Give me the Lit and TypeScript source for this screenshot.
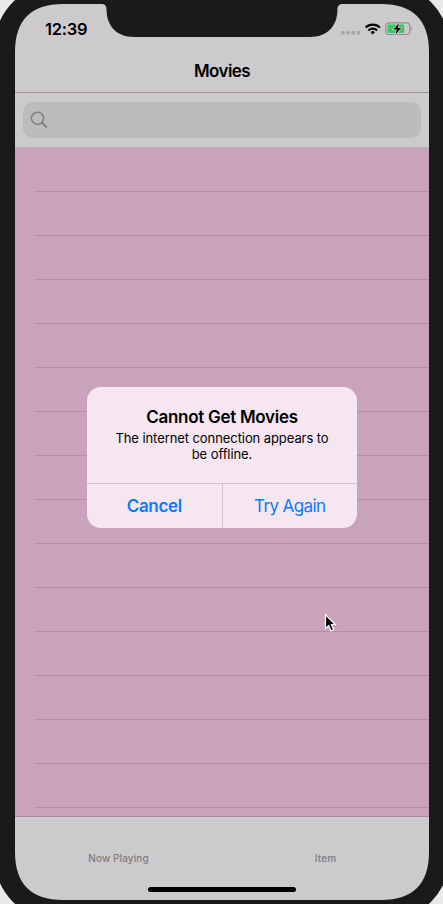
import { LitElement, html, css, svg } from "lit";
import { customElement } from "lit/decorators.js";

const ROWS = Array.from({ length: 15 });

@customElement("status-bar")
class StatusBar extends LitElement {
  static styles = css`
    :host { display: flex; height: 44px; justify-content: space-between; box-sizing: border-box; padding: 0 17px 0 30px; }
    .time { padding-top: 14px; font-size: 16.5px; line-height: 22px; font-weight: 600; letter-spacing: -0.25px; color: #000; }
    .icons { display: flex; padding-top: 16px; }
  `;
  render() {
    return html`
      <div class="time">12:39</div>
      <div class="icons">
        <svg width="72" height="18" viewBox="340 20 72 18">
          ${[341.2, 346.4, 351.5, 356.6].map(
            (x) => svg`<rect x=${x} y="31" width="3.6" height="3.6" rx="1.2" fill="#a8a6a9" />`
          )}
          <g fill="none" stroke="#000" stroke-width="2.2">
            <path d="M365.6 27.5a10.2 10.2 0 0 1 14.3 0" />
            <path d="M368.4 30.5a6.200 6.200 0 0 1 8.700 0" />
          </g>
          <path d="M372.75 34.500l-2.200-2.200a3 3 0 0 1 4.400 0z" fill="#000" />
          <rect x="385.800" y="22.900" width="24" height="11.600" rx="3.400" fill="none" stroke="#8f8d90" stroke-width="1.100" />
          <rect x="387.600" y="24.500" width="16.600" height="8.400" rx="1.400" fill="#30cb5a" />
          <path d="M410.700 26.600c1.600.8 1.600 3.400 0 4.200z" fill="#8f8d90" />
          <path d="M399.200 23.200l-5.800 6.300h3.500l-1.500 5.100 5.800-6.500h-3.500z" fill="#000" stroke="#cccacd" stroke-width="1.600" paint-order="stroke" />
        </svg>
      </div>
    `;
  }
}

@customElement("alert-dialog")
class AlertDialog extends LitElement {
  static styles = css`
    :host { display: flex; flex-direction: column; width: 270px; height: 140.5px; box-sizing: border-box; border-radius: 14px; background: #f5e6f1; overflow: hidden; text-align: center; color: #000; }
    .body { height: 96px; padding-top: 19px; box-sizing: border-box; flex: none; }
    .title { font-size: 17px; line-height: 22px; font-weight: 600; letter-spacing: -0.28px; }
    .message { margin: 2px 16px 0; font-size: 13px; line-height: 16px; letter-spacing: -0.08px; }
    .actions { display: flex; height: 45px; box-sizing: border-box; border-top: 1px solid #d3c3cf; flex: none; }
    .action { flex: 1; font-size: 17px; line-height: 44px; color: #087cff; letter-spacing: -0.6px; }
    .action.preferred { font-weight: 600; letter-spacing: -0.35px; border-right: 1px solid #d3c3cf; }
  `;
  render() {
    return html`
      <div class="body">
        <div class="title">Cannot Get Movies</div>
        <div class="message">The internet connection appears to<br />be offline.</div>
      </div>
      <div class="actions">
        <div class="action preferred">Cancel</div>
        <div class="action">Try Again</div>
      </div>
    `;
  }
}

@customElement("app-root")
class AppRoot extends LitElement {
  static styles = css`
    :host { display: block; position: relative; width: 443px; height: 904px; overflow: hidden; box-sizing: border-box; padding: 4px 14px 4px 15px; background: #e9e9e9; font-family: Inter, "Liberation Sans", sans-serif; }
    .screen { display: flex; flex-direction: column; width: 414px; height: 896px; background: #cccacd; }
    .nav { height: 45px; box-sizing: border-box; border-bottom: 1px solid #9b949a; text-align: center; font-size: 17px; line-height: 46px; font-weight: 600; letter-spacing: -0.55px; color: #000; }
    .search { height: 55px; box-sizing: border-box; padding: 9px 8px; border-bottom: 1px solid #bbb2b9; }
    .field { display: flex; align-items: center; height: 36px; padding-left: 7px; border-radius: 10px; background: #bcbcbc; }
    .list { height: 668px; overflow: hidden; background: #c9a2bc; }
    .row { height: 44px; margin-left: 20px; box-sizing: border-box; border-bottom: 1px solid #b58fa8; }
    .tabs { display: flex; flex: 1; box-sizing: border-box; border-top: 1px solid #ad879f; }
    .tab { flex: 1; padding-top: 34px; text-align: center; font-size: 10px; line-height: 14px; font-weight: 500; letter-spacing: 0.1px; color: #7e7c7f; }
    .bezel, .home, .pointer, alert-dialog { position: absolute; }
    .bezel { left: 0; top: 0; }
    .home { left: 148px; top: 887px; width: 148px; height: 5px; border-radius: 3px; background: #000; }
    alert-dialog { left: 87px; top: 387px; }
    .pointer { left: 322px; top: 611px; }
  `;
  render() {
    return html`
      <div class="screen">
        <status-bar></status-bar>
        <div class="nav">Movies</div>
        <div class="search">
          <div class="field">
            <svg width="18" height="18" viewBox="0 0 18 18" fill="none" stroke="#7c7b7d" stroke-width="1.4">
              <circle cx="7.5" cy="7.2" r="6.1" />
              <path d="M11.8 11.500l5 5" stroke-width="1.800" />
            </svg>
          </div>
        </div>
        <div class="list">${ROWS.map(() => html`<div class="row"></div>`)}</div>
        <div class="tabs">
          <div class="tab">Now Playing</div>
          <div class="tab">Item</div>
        </div>
      </div>
      <svg class="bezel" width="443" height="904" viewBox="0 0 443 904">
        <path
          fill="#1a1a1a"
          fill-rule="evenodd"
          d="M59-17H385a65 65 0 0 1 65 65V856a65 65 0 0 1-65 65H59a65 65 0 0 1-65-65V48a65 65 0 0 1 65-65Z
             M63 4H101C105 4 106.600 5.700 106.600 10C106.600 26 117 37 134 37H310C327 37 337.400 26 337.400 10C337.400 5.700 339 4 343 4H381C413 4 429 20 429 52V852C429 884 413 900 381 900H63C31 900 15 884 15 852V52C15 20 31 4 63 4Z"
        />
      </svg>
      <div class="home"></div>
      <alert-dialog></alert-dialog>
      <svg class="pointer" width="18" height="24" viewBox="0 0 18 24">
        <path d="M3.500 3.800V17.400L6.700 14.500L9 20L11.700 18.800L9.400 13.500H13.300Z" fill="#000" stroke="#fff" stroke-width="1.200" />
      </svg>
    `;
  }
}
